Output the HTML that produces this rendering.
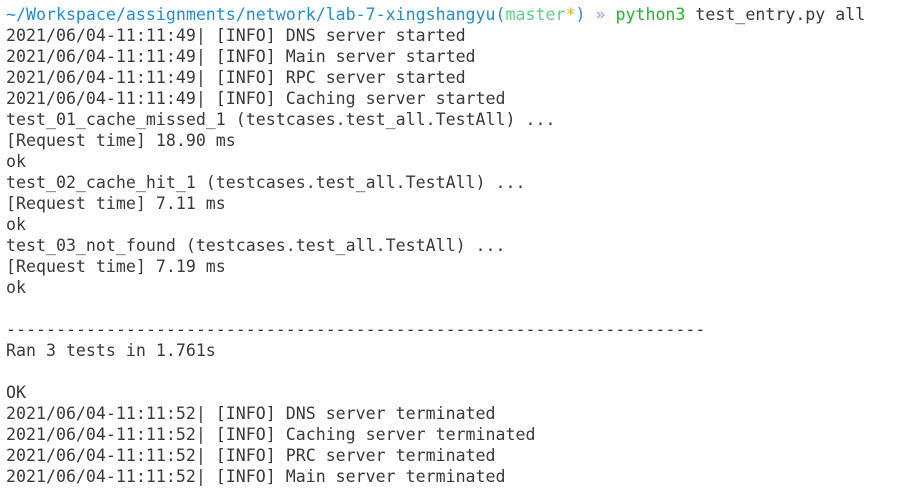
<!DOCTYPE html>
<html><head><meta charset="utf-8"><style>
html,body{margin:0;padding:0;background:#fff;width:904px;height:492px;overflow:hidden}
pre{margin:0;padding:4px 0 0 6px;font-family:"DejaVu Sans Mono","Liberation Mono",monospace;font-size:16.6px;line-height:21px;color:#3a3a3a}
.b{color:#1e8fd6}.g{color:#5fcf8a}.y{color:#f0b020}.p{color:#9aa0f0}.gr{color:#22b822}
</style></head><body><pre><span class="b">~/Workspace/assignments/network/lab-7-xingshangyu</span><span class="b">(</span><span class="g">master</span><span class="y">*</span><span class="b">)</span> <span class="p">»</span> <span class="gr">python3</span> test_entry.py all
2021/06/04-11:11:49| [INFO] DNS server started
2021/06/04-11:11:49| [INFO] Main server started
2021/06/04-11:11:49| [INFO] RPC server started
2021/06/04-11:11:49| [INFO] Caching server started
test_01_cache_missed_1 (testcases.test_all.TestAll) ...
[Request time] 18.90 ms
ok
test_02_cache_hit_1 (testcases.test_all.TestAll) ...
[Request time] 7.11 ms
ok
test_03_not_found (testcases.test_all.TestAll) ...
[Request time] 7.19 ms
ok

----------------------------------------------------------------------
Ran 3 tests in 1.761s

OK
2021/06/04-11:11:52| [INFO] DNS server terminated
2021/06/04-11:11:52| [INFO] Caching server terminated
2021/06/04-11:11:52| [INFO] PRC server terminated
2021/06/04-11:11:52| [INFO] Main server terminated</pre></body></html>
